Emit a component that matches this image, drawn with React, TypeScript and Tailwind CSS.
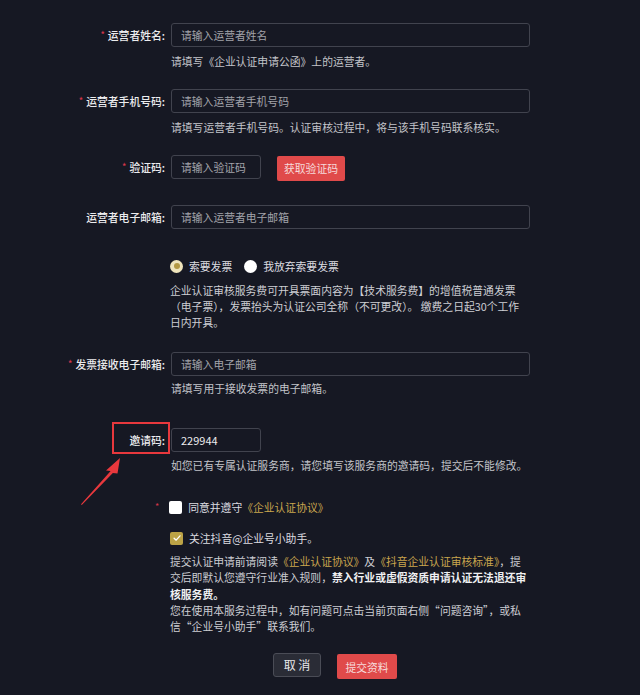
import React from 'react';

const labelCls =
  'w-[165px] shrink-0 h-6 flex items-center justify-end font-medium text-[#ececee] whitespace-nowrap';
const inputCls =
  'h-6 rounded-[3px] border border-[#41434e] bg-transparent pl-[9px] text-[#ececee] placeholder:text-[#a2a3aa] outline-none text-[10.8px]';
const hintCls = 'leading-4 text-[#c3c4c9] whitespace-nowrap';

function Req() {
  return <span className="mr-[3px] text-[9px] text-[#d4364a]">*</span>;
}

function Field({
  label,
  required,
  placeholder,
  hint,
  hintGap = 'mt-[6px]',
  className = '',
}: {
  label: string;
  required?: boolean;
  placeholder: string;
  hint?: string;
  hintGap?: string;
  className?: string;
}) {
  return (
    <div className={`flex ${className}`}>
      <div className={labelCls}>
        {required && <Req />}
        {label}:
      </div>
      <div className="ml-[6px] flex flex-col">
        <input className={`${inputCls} w-[359px]`} placeholder={placeholder} />
        {hint && <p className={`${hintGap} ${hintCls}`}>{hint}</p>}
      </div>
    </div>
  );
}

export default function App() {
  return (
    <main className="min-h-screen bg-[#161823] text-[10.8px] [font-family:'Noto_Sans_CJK_SC',sans-serif]">
      <div className="relative w-[640px] pt-[23px] pb-[19px]">
        <Field label="运营者姓名" required placeholder="请输入运营者姓名" hint="请填写《企业认证申请公函》上的运营者。" />
        <Field
          className="mt-[20px]"
          label="运营者手机号码"
          required
          placeholder="请输入运营者手机号码"
          hint="请填写运营者手机号码。认证审核过程中，将与该手机号码联系核实。"
        />

        {/* verification code */}
        <div className="mt-[20px] flex">
          <div className={labelCls}>
            <Req />
            验证码:
          </div>
          <div className="ml-[6px] flex items-start gap-4">
            <input className={`${inputCls} w-[90px]`} placeholder="请输入验证码" />
            <button className="mt-px h-[25px] w-[68px] rounded-[2px] bg-[#e04a4a] text-[10.8px] text-[#f6dada]">
              获取验证码
            </button>
          </div>
        </div>

        <Field className="mt-[24px]" label="运营者电子邮箱" placeholder="请输入运营者电子邮箱" />

        {/* invoice */}
        <div className="mt-[29px] ml-[170px] flex h-4 items-center text-[#dcdce0]">
          <span className="flex h-[13px] w-[13px] items-center justify-center rounded-full bg-[#efe4bc]">
            <span className="h-[6px] w-[6px] rounded-full bg-[#b39844]" />
          </span>
          <span className="ml-[6px]">索要发票</span>
          <span className="ml-[12px] h-[13px] w-[13px] rounded-full bg-white" />
          <span className="ml-[6px]">我放弃索要发票</span>
        </div>
        <div className="mt-[8px] ml-[170px] leading-4 text-[#cdced3] whitespace-nowrap">
          <p>企业认证审核服务费可开具票面内容为【技术服务费】的增值税普通发票</p>
          <p>（电子票），发票抬头为认证公司全称（不可更改）。 缴费之日起30个工作</p>
          <p>日内开具。</p>
        </div>

        <Field
          className="mt-[22px]"
          label="发票接收电子邮箱"
          required
          placeholder="请输入电子邮箱"
          hint="请填写用于接收发票的电子邮箱。"
          hintGap="mt-[4px]"
        />

        {/* invite code */}
        <div className="mt-[32px] flex">
          <div className={labelCls}>邀请码:</div>
          <div className="ml-[6px] flex flex-col">
            <input className={`${inputCls} w-[90px] text-[11px]`} defaultValue="229944" />
            <p className={`mt-[5px] ${hintCls}`}>如您已有专属认证服务商，请您填写该服务商的邀请码，提交后不能修改。</p>
          </div>
        </div>

        {/* agreement */}
        <div className="mt-[26px] flex h-4 items-center">
          <span className="ml-[155px] text-[9px] text-[#d4364a]">*</span>
          <span className="ml-[10px] h-[13px] w-[13px] rounded-[2px] bg-white" />
          <span className="ml-[6px] text-[#dcdce0]">同意并遵守</span>
          <span className="text-[#c9a64e]">《企业认证协议》</span>
        </div>
        <div className="mt-[15px] ml-[170px] flex h-4 items-center">
          <span className="flex h-[13px] w-[13px] items-center justify-center rounded-[2px] bg-[#bca346]">
            <svg viewBox="0 0 12 12" className="h-[10px] w-[10px]">
              <path d="M2.5 6.2 5 8.6 9.6 3.4" fill="none" stroke="#fff" strokeWidth="1.6" strokeLinecap="round" strokeLinejoin="round" />
            </svg>
          </span>
          <span className="ml-[6px] text-[#dcdce0]">关注抖音@企业号小助手。</span>
        </div>
        <div className="mt-[7px] ml-[170px] leading-[16.25px] text-[#cdced3] whitespace-nowrap">
          <p>
            提交认证申请前请阅读<span className="text-[#c9a64e]">《企业认证协议》</span>及
            <span className="text-[#c9a64e]">《抖音企业认证审核标准》</span>，提
          </p>
          <p>
            交后即默认您遵守行业准入规则，
            <span className="font-bold text-[#f0f0f2]">禁入行业或虚假资质申请认证无法退还审</span>
          </p>
          <p className="font-bold text-[#f0f0f2]">核服务费。</p>
          <p>您在使用本服务过程中，如有问题可点击当前页面右侧“问题咨询”，或私</p>
          <p>信“企业号小助手”联系我们。</p>
        </div>

        {/* actions */}
        <div className="mt-[19px] ml-[273px] flex items-start gap-4">
          <button className="h-6 w-12 rounded-[3px] border border-[#4a4c56] bg-[#2a2c36] text-[12px] text-[#e8e8ea]">
            取 消
          </button>
          <button className="mt-px h-[25px] w-[60px] rounded-[2px] bg-[#e04a4a] text-[10.8px] text-[#f6dada]">
            提交资料
          </button>
        </div>

        {/* annotation */}
        <div className="absolute left-[112px] top-[422px] h-[32px] w-[58px] border-2 border-[#e8383d]" />
        <svg className="absolute left-[78px] top-[455px] h-[52px] w-[45px]" viewBox="0 0 45 52">
          <polygon
            points="42,3 39.5,18.5 34.85,18 3.77,49.94 3.03,49.26 32.65,15.98 28,15.5"
            fill="#e8383d"
          />
        </svg>
      </div>
    </main>
  );
}
